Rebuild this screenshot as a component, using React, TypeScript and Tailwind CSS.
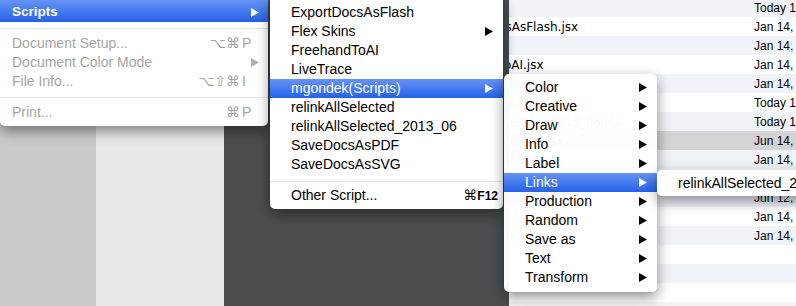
import React from "react";

// Triángulo de submenú
function Arrow({ className = "" }: { className?: string }) {
  return (
    <svg width="8" height="9" viewBox="0 0 8 9" className={`shrink-0 ${className}`}>
      <path d="M0 0L8 4.5L0 9Z" fill="currentColor" />
    </svg>
  );
}

const activeRow = "bg-linear-to-b from-[#6592f4] to-[#2461e9] text-white";

const scriptItems = [
  { label: "ExportDocsAsFlash" },
  { label: "Flex Skins", sub: true },
  { label: "FreehandToAI" },
  { label: "LiveTrace" },
  { label: "mgondek(Scripts)", sub: true, active: true },
  { label: "relinkAllSelected" },
  { label: "relinkAllSelected_2013_06" },
  { label: "SaveDocsAsPDF" },
  { label: "SaveDocsAsSVG" },
];

const folderItems = [
  "Color",
  "Creative",
  "Draw",
  "Info",
  "Label",
  "Links",
  "Production",
  "Random",
  "Save as",
  "Text",
  "Transform",
];

const fileRows = [
  { name: "Actions", date: "Today 11:02 AM" },
  { name: "ExportDocsAsFlash.jsx", date: "Jan 14, 2013, 9:12 AM" },
  { name: "Flex Skins", date: "Jan 14, 2013, 9:12 AM" },
  { name: "FreehandToAI.jsx", date: "Jan 14, 2013, 9:12 AM" },
  { name: "LiveTrace.jsx", date: "Jan 14, 2013, 9:12 AM" },
  { name: "mgondek(Scripts)", date: "Today 10:48 AM" },
  { name: "relinkAllSelected_2013_06.jsx", date: "Today 10:41 AM" },
  { name: "relinkAllSelected.jsx", date: "Jun 14, 2013, 4:20 PM", selected: true },
  { name: "SaveDocsAsPDF.jsx", date: "Jan 14, 2013, 9:12 AM" },
  { name: "SaveDocsAsSVG.jsx", date: "Jan 14, 2013, 9:12 AM" },
  { name: "SelectOpenPaths.jsx", date: "Jun 12, 2013, 2:05 PM" },
  { name: "Slicer.jsx", date: "Jan 14, 2013, 9:12 AM" },
  { name: "TextCase.jsx", date: "Jan 14, 2013, 9:12 AM" },
  { name: "", date: "" },
  { name: "", date: "" },
  { name: "", date: "" },
  { name: "", date: "" },
];

export default function App() {
  return (
    <div className="relative w-[796px] h-[306px] overflow-hidden flex font-['Liberation_Sans','DejaVu_Sans',sans-serif] text-black">
      {/* FONDO: columnas de la ventana */}
      <div className="w-[96px] shrink-0 bg-[#cbcbcb]" />
      <div className="w-[128px] shrink-0 bg-[#e8e8e8]" />
      <div className="w-[285px] shrink-0 bg-[#4a4e4f]" />

      {/* LISTA DE ARCHIVOS */}
      <div className="flex-1 overflow-hidden bg-white">
        <div className="-mt-[2px]">
          {fileRows.map((row, i) => (
            <div
              key={i}
              className={`flex h-[19px] items-center whitespace-nowrap ${
                row.selected ? "bg-[#d4d4d4]" : i % 2 === 0 ? "bg-[#f0f4f9]" : "bg-white"
              }`}
            >
              <span className="-ml-[66px] w-[311px] shrink-0 text-[12px] font-['DejaVu_Sans',sans-serif]">
                {row.name}
              </span>
              <span className="text-[12px]">{row.date}</span>
            </div>
          ))}
        </div>
      </div>

      {/* MENÚ ARCHIVO */}
      <div className="absolute left-0 top-0 z-10 w-[268px] bg-white rounded-b-[5px] shadow-[0_5px_14px_rgba(0,0,0,0.45)] pb-[4px] text-[14px]">
        <div className={`flex h-[22px] items-center pt-[2px] pl-[12px] pr-[9px] ${activeRow}`}>
          <span className="flex-1 font-bold text-[13.5px]">Scripts</span>
          <Arrow />
        </div>
        <div className="flex h-[12px] items-center">
          <div className="h-px w-full bg-[#e3e3e3]" />
        </div>
        <div className="flex h-[19px] items-center pl-[12px] pr-[12px] text-[#a5a5a5]">
          <span className="flex-1">Document Setup...</span>
          <span>⌥⌘</span>
          <span className="ml-[2px] w-[14px]">P</span>
        </div>
        <div className="flex h-[19px] items-center pl-[12px] pr-[9px] text-[#a5a5a5]">
          <span className="flex-1">Document Color Mode</span>
          <Arrow className="text-[#b0b0b0]" />
        </div>
        <div className="flex h-[19px] items-center pl-[12px] pr-[12px] text-[#a5a5a5]">
          <span className="flex-1">File Info...</span>
          <span>⌥⇧⌘</span>
          <span className="ml-[2px] w-[14px]">I</span>
        </div>
        <div className="flex h-[12px] items-center">
          <div className="h-px w-full bg-[#e3e3e3]" />
        </div>
        <div className="flex h-[19px] items-center pl-[12px] pr-[12px] text-[#a5a5a5]">
          <span className="flex-1">Print...</span>
          <span>⌘</span>
          <span className="ml-[2px] w-[14px]">P</span>
        </div>
      </div>

      {/* SUBMENÚ SCRIPTS */}
      <div className="absolute left-[270px] -top-[1px] z-20 w-[233px] bg-white rounded-b-[5px] shadow-[0_5px_14px_rgba(0,0,0,0.45)] pt-[4px] pb-[4px] text-[14px]">
        {scriptItems.map((item) => (
          <div
            key={item.label}
            className={`flex h-[19px] items-center pl-[21px] pr-[10px] ${item.active ? activeRow : ""}`}
          >
            <span className="flex-1">{item.label}</span>
            {item.sub && <Arrow />}
          </div>
        ))}
        <div className="h-[12px] pt-[7px]">
          <div className="h-px w-full bg-[#e3e3e3]" />
        </div>
        <div className="flex h-[19px] items-center pl-[21px] pr-[5px]">
          <span className="flex-1">Other Script...</span>
          <span>⌘</span>
          <span className="font-bold text-[12px]">F12</span>
        </div>
      </div>

      {/* SUBMENÚ CARPETAS */}
      <div className="absolute left-[504px] top-[74px] z-30 w-[153px] bg-[rgba(255,255,255,0.97)] rounded-[5px] shadow-[0_5px_14px_rgba(0,0,0,0.45)] pt-[4px] pb-[5px] text-[14px]">
        {folderItems.map((label) => (
          <div
            key={label}
            className={`flex h-[19px] items-center pl-[21px] pr-[10px] ${label === "Links" ? activeRow : ""}`}
          >
            <span className="flex-1">{label}</span>
            <Arrow />
          </div>
        ))}
      </div>

      {/* SUBMENÚ LINKS */}
      <div className="absolute left-[657px] top-[170px] z-40 w-[190px] bg-white rounded-[5px] shadow-[0_5px_14px_rgba(0,0,0,0.45)] pt-[4px] pb-[3px] text-[14px]">
        <div className="flex h-[19px] items-center pl-[21px] whitespace-nowrap">
          relinkAllSelected_2013_06
        </div>
      </div>
    </div>
  );
}
